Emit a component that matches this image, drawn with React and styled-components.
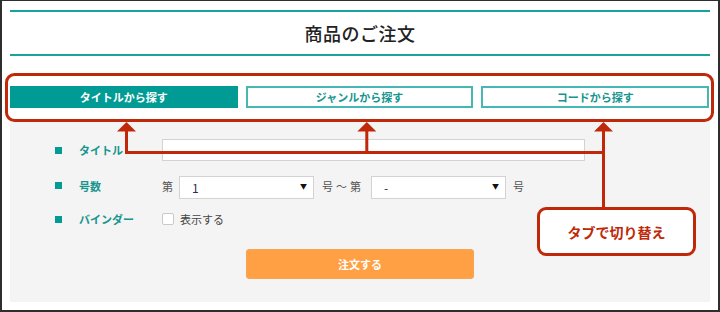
import React from "react";
import styled, { createGlobalStyle } from "styled-components";

const RED = "#c0280a";
const TEAL = "#009b94";

const Global = createGlobalStyle`
  html, body { margin: 0; padding: 0; background: #fff; }
  body { font-family: "Noto Sans CJK JP", "Noto Sans", sans-serif; }
`;

const Frame = styled.div`
  position: relative;
  width: 720px;
  height: 312px;
  box-sizing: border-box;
  border: 2px solid #2e2e2e;
  border-top-width: 1px;
  background: #fff;
  padding: 9px 8px 0;
`;

const Header = styled.header`
  height: 42px;
  border-top: 2px solid #1aa29c;
  border-bottom: 2px solid #1aa29c;
  display: flex;
  align-items: center;
  justify-content: center;
`;

const Title = styled.h1`
  margin: 0;
  font-size: 18px;
  font-weight: 500;
  color: #222;
  letter-spacing: 0.5px;
`;

const Tabs = styled.div`
  margin-top: 30px;
  display: grid;
  grid-template-columns: repeat(3, 1fr);
  gap: 8px;
  padding-right: 1px;
`;

const Tab = styled.button`
  height: 22px;
  box-sizing: border-box;
  margin: 0;
  padding: 0;
  font-family: inherit;
  font-size: 11px;
  font-weight: 700;
  border: 2px solid ${(p) => (p.$active ? TEAL : "#45b8b3")};
  background: ${(p) => (p.$active ? TEAL : "#fff")};
  color: ${(p) => (p.$active ? "#fff" : "#17958f")};
  display: flex;
  align-items: center;
  justify-content: center;
`;

const FormArea = styled.section`
  margin-top: 12px;
  height: 182px;
  box-sizing: border-box;
  background: #f4f4f4;
  padding-top: 19px;
  display: flex;
  flex-direction: column;
`;

const Row = styled.div`
  display: flex;
  align-items: center;
  padding-left: 45px;
  height: ${(p) => p.$h || 22}px;
  margin-bottom: ${(p) => p.$mb || 0}px;
`;

const Marker = styled.span`
  width: 7px;
  height: 7px;
  background: ${TEAL};
  margin-right: 17px;
  flex: none;
`;

const Label = styled.span`
  width: 83px;
  font-size: 11px;
  font-weight: 700;
  color: #17958f;
  flex: none;
`;

const TextInput = styled.input`
  width: 423px;
  height: 22px;
  box-sizing: border-box;
  border: 1px solid #d3d3d3;
  background: #fff;
  margin: 0;
  padding: 0 8px;
  outline: none;
`;

const Small = styled.span`
  font-size: 11px;
  color: #555;
  margin: 0 ${(p) => p.$mr || 0}px 0 ${(p) => p.$ml || 0}px;
  white-space: pre;
`;

const Range = styled.span`
  display: flex;
  gap: 3px;
  margin: 0 10px 0 8px;
`;

const SelectWrap = styled.div`
  position: relative;
  width: 135px;
  height: 23px;
`;

const Select = styled.select`
  appearance: none;
  -webkit-appearance: none;
  width: 100%;
  height: 100%;
  box-sizing: border-box;
  border: 1px solid #d3d3d3;
  border-radius: 0;
  background: #fff;
  margin: 0;
  padding: 0 0 0 12px;
  font-family: "Noto Sans CJK JP", sans-serif;
  font-size: 12px;
  color: #2b2b55;
  outline: none;
`;

const Caret = styled.span`
  position: absolute;
  right: 7px;
  top: 50%;
  transform: translateY(-50%);
  font-size: 7px;
  color: #111;
  pointer-events: none;
`;

const Check = styled.label`
  display: flex;
  align-items: center;
  gap: 6px;
  font-size: 11px;
  color: #444;
`;

const Box = styled.span`
  width: 12px;
  height: 12px;
  box-sizing: border-box;
  border: 1px solid #c9c9c9;
  border-radius: 2px;
  background: #fff;
`;

const Submit = styled.button`
  align-self: center;
  margin-top: 19px;
  width: 228px;
  height: 30px;
  border: 1px solid #f7a550;
  border-radius: 3px;
  background: #ffa044;
  color: #fff;
  font-family: inherit;
  font-size: 11px;
  font-weight: 700;
`;

const Overlay = styled.svg`
  position: absolute;
  left: -2px;
  top: -1px;
  width: 720px;
  height: 312px;
  pointer-events: none;
`;

const Callout = styled.div`
  position: absolute;
  left: 535px;
  top: 206px;
  width: 159px;
  height: 49px;
  box-sizing: border-box;
  border: 3px solid ${RED};
  border-radius: 9px;
  background: #fff;
  color: ${RED};
  font-size: 14px;
  font-weight: 700;
  display: flex;
  align-items: center;
  justify-content: center;
`;

const Arrow = ({ x }) => (
  <polygon points={`${x},122 ${x - 9.5},131.5 ${x + 9.5},131.5`} fill={RED} />
);

function SelectBox({ value, options }) {
  return (
    <SelectWrap>
      <Select defaultValue={value}>
        {options.map((o) => (
          <option key={o}>{o}</option>
        ))}
      </Select>
      <Caret>▼</Caret>
    </SelectWrap>
  );
}

export default function App() {
  return (
    <>
      <Global />
      <Frame>
        <Header>
          <Title>商品のご注文</Title>
        </Header>
        <Tabs>
          <Tab $active>タイトルから探す</Tab>
          <Tab>ジャンルから探す</Tab>
          <Tab>コードから探す</Tab>
        </Tabs>
        <FormArea>
          <Row $mb={13}>
            <Marker />
            <Label>タイトル</Label>
            <TextInput />
          </Row>
          <Row $h={23} $mb={11}>
            <Marker />
            <Label>号数</Label>
            <Small $mr={6}>第</Small>
            <SelectBox value="1" options={["1", "2", "3"]} />
            <Range>
              <Small>号</Small>
              <Small>〜</Small>
              <Small>第</Small>
            </Range>
            <SelectBox value="-" options={["-", "1", "2"]} />
            <Small $ml={7}>号</Small>
          </Row>
          <Row>
            <Marker />
            <Label>バインダー</Label>
            <Check>
              <Box />
              表示する
            </Check>
          </Row>
          <Submit>注文する</Submit>
        </FormArea>
        <Overlay viewBox="0 0 720 312">
          <rect x="6.5" y="74.5" width="706" height="46" rx="8" fill="none" stroke={RED} strokeWidth="3" />
          <path d="M126.5 131 V152.5 H603.5 M366.8 131 V152.5 M603.5 131 V208" fill="none" stroke={RED} strokeWidth="3" />
          <Arrow x={126.5} />
          <Arrow x={366.8} />
          <Arrow x={603.5} />
        </Overlay>
        <Callout>タブで切り替え</Callout>
      </Frame>
    </>
  );
}
